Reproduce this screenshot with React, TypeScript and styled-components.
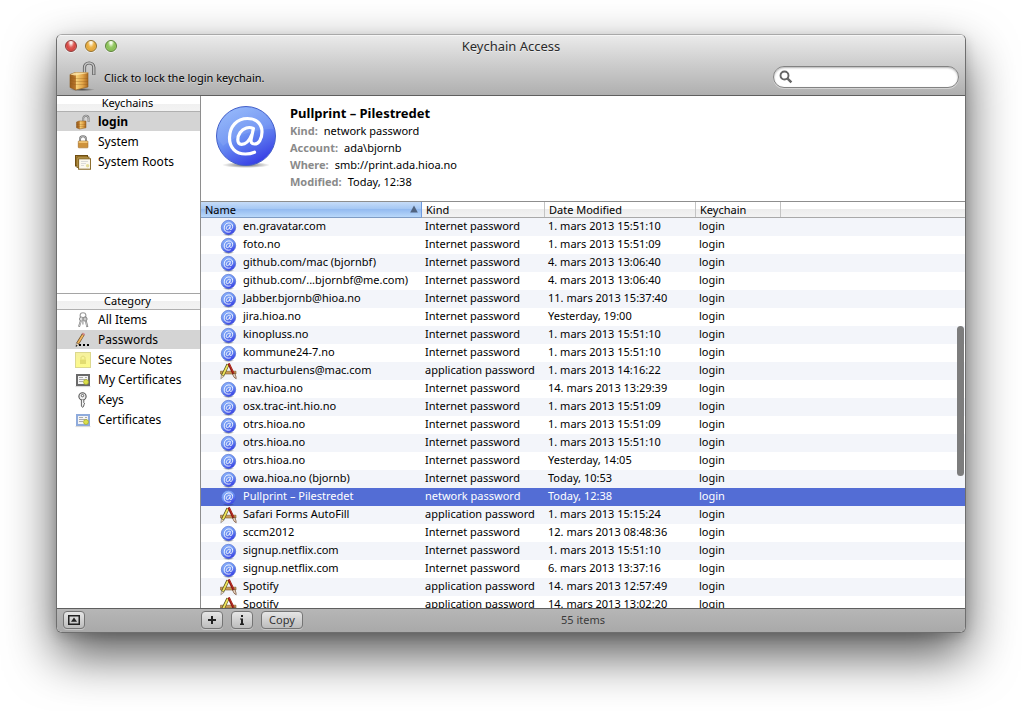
import React from "react";
import styled, { createGlobalStyle, css } from "styled-components";

const GlobalStyle = createGlobalStyle`
  * { box-sizing: border-box; }
  html, body { margin: 0; padding: 0; }
  body {
    background: #fff;
    color: #000;
    font-family: "Noto Sans", "Open Sans", sans-serif;
    font-size: 11px;
    overflow: hidden;
  }
  button, input { font-family: inherit; }
`;

const Desktop = styled.div`
  display: flex;
  height: 100vh;
  min-height: 480px;
  padding: 34px 56px 78px;
`;

const Window = styled.main`
  flex: 1;
  min-width: 0;
  display: flex;
  flex-direction: column;
  border: 1px solid #6e6e6e;
  border-top-color: #a8a8a8;
  border-radius: 6px;
  overflow: hidden;
  background: #fff;
  box-shadow: 0 22px 50px rgba(0, 0, 0, 0.66), 0 4px 12px rgba(0, 0, 0, 0.16);
`;

const Header = styled.header`
  background: linear-gradient(#ebebeb, #d2d2d2 40%, #afafaf);
  border-bottom: 1px solid #5f5f5f;
  box-shadow: inset 0 1px 0 #f6f6f6;
`;

const TitleBar = styled.div`
  display: grid;
  grid-template-columns: 1fr auto 1fr;
  align-items: center;
  height: 22px;
  padding: 0 8px;
`;

const Lights = styled.div`
  display: flex;
  gap: 8px;
`;

const Light = styled.button<{ $hue: "red" | "amber" | "green" }>`
  width: 12px;
  height: 12px;
  padding: 0;
  border-radius: 50%;
  border: 1px solid
    ${(p) => ({ red: "#8d3a38", amber: "#94702c", green: "#5b8238" })[p.$hue]};
  background: ${(p) =>
    ({
      red: "radial-gradient(ellipse at 50% 10%, #fbe9e8 0 14%, #e0605b 42%, #d5433f 65%, #f7a5a0)",
      amber: "radial-gradient(ellipse at 50% 10%, #fdf5e0 0 14%, #edb64e 42%, #e5a63a 65%, #fbe08c)",
      green: "radial-gradient(ellipse at 50% 10%, #f2fbe8 0 14%, #98cb68 42%, #88bf57 65%, #cff09a)",
    })[p.$hue]};
  box-shadow: 0 1px 0 rgba(255, 255, 255, 0.5);
`;

const Title = styled.h1`
  margin: 0;
  font-size: 13px;
  font-weight: 400;
  line-height: 22px;
  color: #2b2b2b;
  text-shadow: 0 1px 0 rgba(255, 255, 255, 0.5);
`;

const Toolbar = styled.div`
  display: flex;
  align-items: center;
  justify-content: space-between;
  height: 38px;
  padding: 0 6px 0 12px;
`;

const LockButton = styled.button`
  display: flex;
  align-items: center;
  gap: 7px;
  padding: 0;
  border: 0;
  background: none;
  color: #000;
  font-size: 11px;
  line-height: 16px;
  text-shadow: 0 1px 0 rgba(255, 255, 255, 0.4);
  span { padding-top: 4px; }
`;

const SearchField = styled.label`
  display: flex;
  align-items: center;
  gap: 4px;
  width: 186px;
  height: 22px;
  margin-top: 2px;
  padding: 0 8px 0 5px;
  border: 1px solid #828282;
  border-radius: 11px;
  background: #fff;
  box-shadow: inset 0 1px 2px rgba(0, 0, 0, 0.3), 0 1px 0 rgba(255, 255, 255, 0.4);
`;

const SearchInput = styled.input`
  flex: 1;
  min-width: 0;
  border: 0;
  padding: 0;
  outline: 0;
  background: none;
  font-size: 11px;
`;

const Body = styled.div`
  flex: 1;
  min-height: 0;
  display: flex;
`;

const Sidebar = styled.nav`
  flex: none;
  width: 144px;
  display: flex;
  flex-direction: column;
  border-right: 1px solid #8e8e8e;
  background: #fff;
`;

const Pane = styled.section<{ $grow?: boolean }>`
  flex: ${(p) => (p.$grow ? "1 1 0" : "0 0 197px")};
  border-top: ${(p) => (p.$grow ? "1px solid #a5a5a5" : "0")};
`;

const PaneTitle = styled.h2`
  margin: 0;
  height: 16px;
  padding-right: 2px;
  border-bottom: 1px solid #b0b0b0;
  background: linear-gradient(#fff 0 50%, #f0f0f0 50%, #f3f3f3);
  font-size: 11px;
  font-weight: 400;
  line-height: 13px;
  text-align: center;
`;

const List = styled.ul`
  margin: 0;
  padding: 0;
  list-style: none;
`;

const Item = styled.a<{ $on?: boolean; $bold?: boolean }>`
  display: flex;
  align-items: center;
  gap: 7px;
  height: 20px;
  padding-left: 18px;
  border-bottom: 1px solid #fff;
  background: ${(p) => (p.$on ? "#d4d4d4" : "none")};
  color: #000;
  font-size: 12px;
  font-weight: ${(p) => (p.$bold ? 700 : 400)};
  line-height: 19px;
  text-decoration: none;
  white-space: nowrap;
  svg { flex: none; }
`;

const Content = styled.div`
  flex: 1;
  min-width: 0;
  display: flex;
  flex-direction: column;
`;

const Details = styled.section`
  display: flex;
  gap: 13px;
  height: 106px;
  padding: 8px 14px 0;
  border-bottom: 1px solid #8e8e8e;
`;

const DetailText = styled.div`
  dl { margin: 0; }
`;

const DetailTitle = styled.h3`
  margin: 0;
  font-size: 13px;
  font-weight: 700;
  line-height: 18px;
`;

const Field = styled.div`
  display: flex;
  gap: 6px;
  line-height: 17px;
  dt { color: #8a8a8a; font-weight: 700; }
  dd { margin: 0; }
`;

const TableArea = styled.div`
  position: relative;
  flex: 1;
  min-height: 0;
  overflow: hidden;
  background: #fff;
`;

const Table = styled.table`
  width: 100%;
  table-layout: fixed;
  border-collapse: separate;
  border-spacing: 0;
  col.name { width: 221px; }
  col.kind { width: 123px; }
  col.date { width: 151px; }
  col.chain { width: 85px; }
`;

const HeadCell = styled.th<{ $sorted?: boolean }>`
  height: 16px;
  padding: 0 0 0 4px;
  border-bottom: 1px solid #a9a9a9;
  background: linear-gradient(#fff 0 50%, #ededed 50%, #f3f3f3);
  font-size: 11px;
  font-weight: 400;
  text-align: left;
  & > div {
    display: flex;
    align-items: center;
    justify-content: space-between;
    height: 15px;
    line-height: 13px;
    padding: 0 3px 1px 0;
    border-right: 1px solid #c4c4c4;
  }
  ${(p) =>
    p.$sorted &&
    css`
      background: linear-gradient(#c6dcf8 0, #a6c8f4 45%, #94bbf0 50%, #b9d8fa);
      border-bottom-color: #7f9cc4;
      & > div { border-right-color: #6f9be0; }
    `}
`;

const Row = styled.tr<{ $selected?: boolean }>`
  height: 18px;
  background: #fff;
  &:nth-child(odd) { background: #f3f5fa; }
  ${(p) =>
    p.$selected &&
    css`
      && { background: #536dd5; color: #fff; }
    `}
`;

const Cell = styled.td`
  height: 18px;
  padding: 0 0 0 3px;
  font-size: 11px;
  line-height: 16px;
  vertical-align: top;
  white-space: nowrap;
`;

const NameBox = styled.div`
  display: flex;
  gap: 6px;
  height: 18px;
  padding-left: 16px;
  svg { flex: none; }
`;

const Thumb = styled.div`
  position: absolute;
  right: 1px;
  top: 124px;
  width: 7px;
  height: 150px;
  border-radius: 4px;
  background: #7d7d7d;
`;

const Footer = styled.footer`
  flex: none;
  display: flex;
  height: 24px;
  border-top: 1px solid #5f5f5f;
  background: linear-gradient(#b6b6b6, #a9a9a9);
`;

const FooterSide = styled.div`
  width: 144px;
  padding: 2px 6px 0;
`;

const FooterMain = styled.div`
  flex: 1;
  display: grid;
  grid-template-columns: 1fr auto 1fr;
  padding-top: 2px;
`;

const ButtonRow = styled.div`
  display: flex;
  gap: 8px;
`;

const PushButton = styled.button<{ $wide?: boolean }>`
  display: flex;
  align-items: center;
  justify-content: center;
  width: ${(p) => (p.$wide ? "42px" : "22px")};
  height: 18px;
  padding: 0;
  border: 1px solid #757575;
  border-radius: 4px;
  background: linear-gradient(#e6e6e6, #bcbcbc);
  box-shadow: 0 1px 0 rgba(255, 255, 255, 0.35);
  color: #333;
  font-size: 11px;
  line-height: 14px;
`;

const Count = styled.output`
  font-size: 11px;
  line-height: 18px;
  color: #3b3b3b;
`;

const Defs = () => (
  <svg width="0" height="0" style={{ display: "block" }} aria-hidden="true">
    <defs>
      <linearGradient id="blue" x1="0.2" y1="0" x2="0.7" y2="1">
        <stop offset="0" stopColor="#8db4fb" />
        <stop offset="0.5" stopColor="#6a8ff2" />
        <stop offset="1" stopColor="#3439e4" />
      </linearGradient>
      <radialGradient id="shade">
        <stop offset="0" stopColor="#000" stopOpacity="0.6" />
        <stop offset="1" stopColor="#000" stopOpacity="0" />
      </radialGradient>
      <linearGradient id="brass" x1="0" y1="0" x2="1" y2="0">
        <stop offset="0" stopColor="#9a5d1b" />
        <stop offset="0.3" stopColor="#b8762a" />
        <stop offset="0.36" stopColor="#f6d078" />
        <stop offset="0.7" stopColor="#e2a548" />
        <stop offset="1" stopColor="#a9671f" />
      </linearGradient>
      <linearGradient id="note" x1="0" y1="0" x2="0" y2="1">
        <stop offset="0" stopColor="#f5f0a0" />
        <stop offset="1" stopColor="#fdfb8a" />
      </linearGradient>
    </defs>
  </svg>
);

/* Stroke of the at-sign emblem, in a 62-unit box. */
const atStroke =
  "M39.5 47.2C36.5 48.5 33.5 49 30.5 49C20.5 49 14.5 42.5 14.5 33C14.5 21.5 22 13.5 32.5 13.5C41.5 13.5 47 19 47 27C47 34.5 43.5 39 39.5 39C36.5 39 35.6 37 36.2 34L38.4 23.4C36 22.4 33.5 22.2 31.3 23C26 24.6 22.8 30 22.8 34.8C22.8 37.8 24.2 39.3 26.6 39.3C31 39.3 34.6 35 36.6 30";

const AtLarge = () => (
  <svg width="62" height="64" viewBox="0 0 62 64" aria-hidden="true">
    <ellipse cx="31" cy="61" rx="24" ry="3" fill="url(#shade)" />
    <circle cx="31" cy="32" r="29.5" fill="url(#blue)" stroke="#4560c8" strokeWidth="1" />
    <path d="M2 34A29 29 0 0 1 59 25C42 25 24 29 8 42Z" fill="#fff" opacity="0.09" />
    <path d={atStroke} transform="translate(0 1)" fill="none" stroke="#fff" strokeWidth="3.2" strokeLinecap="round" strokeLinejoin="round" />
  </svg>
);

const AtSmall = () => (
  <svg width="17" height="18" viewBox="0 0 17 18" aria-hidden="true">
    <ellipse cx="8.5" cy="16.8" rx="6" ry="1.1" fill="url(#shade)" />
    <circle cx="8.5" cy="9.5" r="7.2" fill="url(#blue)" stroke="#4a66cf" strokeWidth="0.6" />
    <path d={atStroke} transform="translate(0.4 1.4) scale(0.26)" fill="none" stroke="#fff" strokeOpacity="0.9" strokeWidth="3.8" strokeLinejoin="round" />
  </svg>
);

const AppIcon = () => (
  <svg width="17" height="18" viewBox="0 0 17 18" aria-hidden="true">
    <path d="M0.4 9.2H16V12H0.4Z" fill="#c99a58" stroke="#7d5a2c" strokeWidth="0.6" />
    <path d="M8 2.4L2.6 13.6" stroke="#4f4b1c" strokeWidth="3.2" />
    <path d="M8 2.7L2.8 13.4" stroke="#efe45c" strokeWidth="1.9" />
    <path d="M4.1 14.2L1.4 12.9L0.8 16.8Z" fill="#f0d9b4" stroke="#444" strokeWidth="0.4" />
    <path d="M8.6 1.4L13.6 12" stroke="#8c1812" strokeWidth="2.4" />
    <path d="M9 1.4L13.6 11" stroke="#c8392c" strokeWidth="0.8" />
    <path d="M12.6 12.2L14.8 11.2L16 14.8L16.2 16.8L14 15.2Z" fill="#e8d6c0" stroke="#5b3018" strokeWidth="0.6" />
  </svg>
);

const BigLock = () => (
  <svg width="28" height="32" viewBox="0 0 28 32" aria-hidden="true">
    <ellipse cx="13" cy="29.6" rx="13" ry="1.6" fill="url(#shade)" />
    <path d="M15.5 14V7.5C15.5 1.5 24.8 1.5 24.8 7.5V15" fill="none" stroke="#5e5e5e" strokeWidth="3.2" />
    <path d="M15.5 14V7.5C15.5 1.5 24.8 1.5 24.8 7.5V14.6" fill="none" stroke="#c4c4c4" strokeWidth="1.5" />
    <path d="M1 14.5L6 12.5H19V27L6.5 30L1 27.5Z" fill="url(#brass)" stroke="#8b5a20" strokeWidth="0.6" />
    <path d="M1.2 17.5L6 18.5H19M1.2 20.5L6 21.5H19M1.2 23.5L6 24.5H19" fill="none" stroke="#8a5316" strokeWidth="0.7" opacity="0.4" />
    <path d="M1.2 14.6L6 15.4L19 13V12.5H6Z" fill="#fbe0a0" opacity="0.9" />
  </svg>
);

const OpenLock = () => (
  <svg width="16" height="16" viewBox="0 0 16 16" aria-hidden="true">
    <path d="M8.2 8V4.5C8.2 0.8 13.6 0.8 13.6 4.5V8" fill="none" stroke="#777" strokeWidth="1.9" />
    <path d="M8.2 7V4.5C8.2 0.8 13.6 0.8 13.6 4.5V7.6" fill="none" stroke="#ddd" strokeWidth="0.7" />
    <path d="M1.5 8L4 7H11V13.8L4.5 15L1.5 13.8Z" fill="url(#brass)" stroke="#8b5a20" strokeWidth="0.5" />
    <path d="M1.5 10.5H11M1.5 12.5H11" stroke="#8a5316" strokeWidth="0.6" opacity="0.4" />
  </svg>
);

const ClosedLock = () => (
  <svg width="16" height="16" viewBox="0 0 16 16" aria-hidden="true">
    <path d="M5 7.5V5.2C5 1.2 11 1.2 11 5.2V7.5" fill="none" stroke="#777" strokeWidth="2" />
    <path d="M5 7.5V5.2C5 1.2 11 1.2 11 5.2V7.5" fill="none" stroke="#ccc" strokeWidth="0.7" />
    <rect x="3.3" y="7" width="9.6" height="6.8" rx="0.6" fill="#e5a84c" stroke="#8d5a1b" strokeWidth="0.6" />
    <path d="M3.6 8H12.6" stroke="#fbdc96" />
    <path d="M3.6 10H12.6M3.6 12H12.6" stroke="#a56a20" strokeWidth="0.7" />
  </svg>
);

const Roots = () => (
  <svg width="16" height="16" viewBox="0 0 16 16" aria-hidden="true">
    <rect x="0.5" y="1.5" width="12" height="10.5" fill="#b48a36" stroke="#6e4e12" />
    <rect x="2" y="3" width="12" height="10.5" fill="#d8b868" stroke="#6e4e12" strokeWidth="0.8" />
    <rect x="3.6" y="4.8" width="12" height="10.4" fill="#fbf8ee" stroke="#80601c" />
    <path d="M6 7.5H13M6 9.5H11M6 11.5H9" stroke="#d2d2d2" strokeWidth="0.8" />
    <circle cx="12.6" cy="11.8" r="1.7" fill="#e4dc9a" />
  </svg>
);

const KeyRing = () => (
  <svg width="16" height="16" viewBox="0 0 16 16" fill="none" aria-hidden="true">
    <circle cx="8" cy="3.6" r="2.9" stroke="#9a9a9a" strokeWidth="1.1" />
    <circle cx="6.4" cy="7" r="2" fill="#ddd" stroke="#8a8a8a" strokeWidth="0.9" />
    <circle cx="10" cy="7" r="2.1" fill="#c9c9c9" stroke="#777" strokeWidth="0.9" />
    <path d="M5.8 9L4 14.8M10.8 9L12.4 15" stroke="#888" strokeWidth="2" />
    <path d="M5.9 9.2L4.3 14M10.8 9.5L12 14" stroke="#ddd" strokeWidth="0.7" />
    <path d="M7.9 8V12.4" stroke="#a8a8a8" strokeWidth="1.4" />
  </svg>
);

const PencilDots = () => (
  <svg width="16" height="16" viewBox="0 0 16 16" aria-hidden="true">
    <path d="M8.6 1.8L2.6 11.6" stroke="#6b4a20" strokeWidth="3" />
    <path d="M8 3L2.8 11.4" stroke="#f0b560" strokeWidth="1.8" />
    <path d="M9 1.2L8 2.8" stroke="#d58e92" strokeWidth="2.6" />
    <path d="M1.4 10.8L4 12.4L1 14.6Z" fill="#f1dcc0" stroke="#444" strokeWidth="0.4" />
    <path d="M0.8 14.8L1.2 13L2.2 13.8Z" fill="#000" />
    <path d="M4 12H6V14H4ZM8 12H10V14H8ZM12 12H14V14H12Z" fill="#000" />
  </svg>
);

const Note = () => (
  <svg width="16" height="16" viewBox="0 0 16 16" aria-hidden="true">
    <rect x="0.5" y="0.5" width="15" height="15" fill="url(#note)" stroke="#dcd88e" />
    <path d="M6 7.5V6C6 3.6 10 3.6 10 6V7.5" fill="none" stroke="#dfd97c" />
    <rect x="5" y="7.5" width="6" height="4.5" fill="#e2dc70" />
  </svg>
);

const Cert = ({ frame }: { frame: string }) => (
  <svg width="16" height="16" viewBox="0 0 16 16" aria-hidden="true">
    <rect x="2" y="3" width="12" height="10" fill="#f4f4f4" stroke={frame} strokeWidth="2" />
    <path d="M4 5.5H8M4 7.5H12M4 9.5H8M10 5.5H12" stroke="#a2a2a2" strokeWidth="0.9" />
    <circle cx="11" cy="10" r="2.5" fill="#dbe04a" stroke="#9a9e1e" strokeWidth="0.6" />
    <path d="M0.5 14.6H15.5" stroke="#000" opacity="0.15" />
  </svg>
);

const KeyIcon = () => (
  <svg width="16" height="16" viewBox="0 0 16 16" fill="none" aria-hidden="true">
    <circle cx="7.5" cy="4.4" r="3.6" fill="#eee" stroke="#555" strokeWidth="1.1" />
    <circle cx="7.5" cy="3.6" r="1.2" fill="#fff" stroke="#555" strokeWidth="0.9" />
    <path d="M6.4 7.8V14L7.6 15.4L8.8 14V12.6L9.8 11.8L8.8 10.8V7.8" fill="#f2f2f2" stroke="#555" strokeWidth="0.9" />
  </svg>
);

const Magnifier = () => (
  <svg width="14" height="14" viewBox="0 0 14 14" fill="none" stroke="#666" aria-hidden="true">
    <circle cx="5.5" cy="5.5" r="4" strokeWidth="1.9" />
    <path d="M8.6 8.6L12.4 12.4" strokeWidth="2.4" />
  </svg>
);

const SortArrow = () => (
  <svg width="8" height="8" viewBox="0 0 8 8" aria-hidden="true">
    <path d="M4 0.5L7.8 7.5H0.2Z" fill="#50637f" />
  </svg>
);

type Entry = [string, string, string, "app"?];
const net = "Internet password";
const app = "application password";
const entries: Entry[] = [
  ["en.gravatar.com", net, "1. mars 2013 15:51:10"],
  ["foto.no", net, "1. mars 2013 15:51:09"],
  ["github.com/mac (bjornbf)", net, "4. mars 2013 13:06:40"],
  ["github.com/...bjornbf@me.com)", net, "4. mars 2013 13:06:40"],
  ["Jabber.bjornb@hioa.no", net, "11. mars 2013 15:37:40"],
  ["jira.hioa.no", net, "Yesterday, 19:00"],
  ["kinopluss.no", net, "1. mars 2013 15:51:10"],
  ["kommune24-7.no", net, "1. mars 2013 15:51:10"],
  ["macturbulens@mac.com", app, "1. mars 2013 14:16:22", "app"],
  ["nav.hioa.no", net, "14. mars 2013 13:29:39"],
  ["osx.trac-int.hio.no", net, "1. mars 2013 15:51:09"],
  ["otrs.hioa.no", net, "1. mars 2013 15:51:09"],
  ["otrs.hioa.no", net, "1. mars 2013 15:51:10"],
  ["otrs.hioa.no", net, "Yesterday, 14:05"],
  ["owa.hioa.no (bjornb)", net, "Today, 10:53"],
  ["Pullprint – Pilestredet", "network password", "Today, 12:38"],
  ["Safari Forms AutoFill", app, "1. mars 2013 15:15:24", "app"],
  ["sccm2012", net, "12. mars 2013 08:48:36"],
  ["signup.netflix.com", net, "1. mars 2013 15:51:10"],
  ["signup.netflix.com", net, "6. mars 2013 13:37:16"],
  ["Spotify", app, "14. mars 2013 12:57:49", "app"],
  ["Spotify", app, "14. mars 2013 13:02:20", "app"],
];
const selected = 15;

const details = [
  ["Kind:", "network password"],
  ["Account:", "ada\\bjornb"],
  ["Where:", "smb://print.ada.hioa.no"],
  ["Modified:", "Today, 12:38"],
];

const keychains = [
  { label: "login", icon: <OpenLock />, on: true },
  { label: "System", icon: <ClosedLock /> },
  { label: "System Roots", icon: <Roots /> },
];

const categories = [
  { label: "All Items", icon: <KeyRing /> },
  { label: "Passwords", icon: <PencilDots />, on: true },
  { label: "Secure Notes", icon: <Note /> },
  { label: "My Certificates", icon: <Cert frame="#6a6a6a" /> },
  { label: "Keys", icon: <KeyIcon /> },
  { label: "Certificates", icon: <Cert frame="#8fabdc" /> },
];

export default function App() {
  return (
    <>
      <GlobalStyle />
      <Defs />
      <Desktop>
        <Window>
          <Header>
            <TitleBar>
              <Lights>
                <Light $hue="red" aria-label="Close" />
                <Light $hue="amber" aria-label="Minimize" />
                <Light $hue="green" aria-label="Zoom" />
              </Lights>
              <Title>Keychain Access</Title>
            </TitleBar>
            <Toolbar>
              <LockButton>
                <BigLock />
                <span>Click to lock the login keychain.</span>
              </LockButton>
              <SearchField>
                <Magnifier />
                <SearchInput type="text" aria-label="Search" />
              </SearchField>
            </Toolbar>
          </Header>
          <Body>
            <Sidebar>
              <Pane>
                <PaneTitle>Keychains</PaneTitle>
                <List>
                  {keychains.map((k) => (
                    <li key={k.label}>
                      <Item href="#" $on={k.on} $bold={k.on}>
                        {k.icon}
                        {k.label}
                      </Item>
                    </li>
                  ))}
                </List>
              </Pane>
              <Pane $grow>
                <PaneTitle>Category</PaneTitle>
                <List>
                  {categories.map((c) => (
                    <li key={c.label}>
                      <Item href="#" $on={c.on}>
                        {c.icon}
                        {c.label}
                      </Item>
                    </li>
                  ))}
                </List>
              </Pane>
            </Sidebar>
            <Content>
              <Details>
                <AtLarge />
                <DetailText>
                  <DetailTitle>Pullprint – Pilestredet</DetailTitle>
                  <dl>
                    {details.map(([k, v]) => (
                      <Field key={k}>
                        <dt>{k}</dt>
                        <dd>{v}</dd>
                      </Field>
                    ))}
                  </dl>
                </DetailText>
              </Details>
              <TableArea>
                <Table>
                  <colgroup>
                    <col className="name" />
                    <col className="kind" />
                    <col className="date" />
                    <col className="chain" />
                    <col />
                  </colgroup>
                  <thead>
                    <tr>
                      <HeadCell $sorted aria-sort="ascending">
                        <div>
                          Name
                          <SortArrow />
                        </div>
                      </HeadCell>
                      <HeadCell><div>Kind</div></HeadCell>
                      <HeadCell><div>Date Modified</div></HeadCell>
                      <HeadCell><div>Keychain</div></HeadCell>
                      <HeadCell />
                    </tr>
                  </thead>
                  <tbody>
                    {entries.map(([name, kind, date, type], i) => (
                      <Row key={i} $selected={i === selected}>
                        <Cell>
                          <NameBox>
                            {type === "app" ? <AppIcon /> : <AtSmall />}
                            <span>{name}</span>
                          </NameBox>
                        </Cell>
                        <Cell>{kind}</Cell>
                        <Cell>{date}</Cell>
                        <Cell>login</Cell>
                        <Cell />
                      </Row>
                    ))}
                  </tbody>
                </Table>
                <Thumb />
              </TableArea>
            </Content>
          </Body>
          <Footer>
            <FooterSide>
              <PushButton aria-label="Hide keychains">
                <svg width="12" height="10" viewBox="0 0 12 10" aria-hidden="true">
                  <rect x="0.75" y="0.75" width="10.5" height="8.5" fill="none" stroke="#222" strokeWidth="1.5" />
                  <path d="M6 2.5L9 6.8H3Z" fill="#222" />
                </svg>
              </PushButton>
            </FooterSide>
            <FooterMain>
              <ButtonRow>
                <PushButton aria-label="Add">
                  <svg width="10" height="10" viewBox="0 0 10 10" aria-hidden="true">
                    <path d="M5 1V9M1 5H9" stroke="#222" strokeWidth="2" />
                  </svg>
                </PushButton>
                <PushButton aria-label="Info">
                  <svg width="6" height="10" viewBox="0 0 6 10" aria-hidden="true">
                    <path d="M2 0H4V2H2ZM1 3.4H4V8.6H5V10H1V8.6H2V4.6H1Z" fill="#222" />
                  </svg>
                </PushButton>
                <PushButton $wide>Copy</PushButton>
              </ButtonRow>
              <Count>55 items</Count>
            </FooterMain>
          </Footer>
        </Window>
      </Desktop>
    </>
  );
}
